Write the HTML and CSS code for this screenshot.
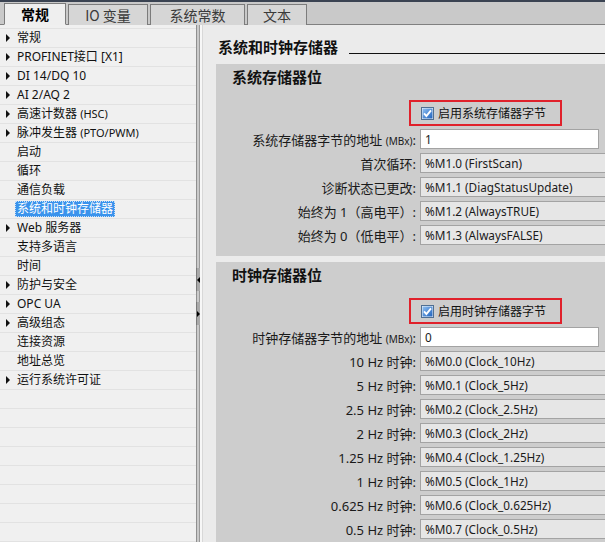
FILE: index.html
```html
<!DOCTYPE html>
<html lang="zh-CN">
<head>
<meta charset="utf-8">
<title>系统和时钟存储器</title>
<link rel="stylesheet" href="styles.css">
</head>
<body>
<div class="topline"></div>
<div class="tabbar">
  <div class="tab active">常规</div>
  <div class="tab t-io">IO 变量</div>
  <div class="tab t-const">系统常数</div>
  <div class="tab t-text">文本</div>
</div>
<div class="main">
  <div class="tree">
    <div class="row"><span class="arrow"></span><span class="lbl">常规</span></div>
    <div class="row"><span class="arrow"></span><span class="lbl">PROFINET接口 [X1]</span></div>
    <div class="row"><span class="arrow"></span><span class="lbl">DI 14/DQ 10</span></div>
    <div class="row"><span class="arrow"></span><span class="lbl">AI 2/AQ 2</span></div>
    <div class="row"><span class="arrow"></span><span class="lbl">高速计数器 <small>(HSC)</small></span></div>
    <div class="row"><span class="arrow"></span><span class="lbl">脉冲发生器 <small>(PTO/PWM)</small></span></div>
    <div class="row"><span class="noarrow"></span><span class="lbl">启动</span></div>
    <div class="row"><span class="noarrow"></span><span class="lbl">循环</span></div>
    <div class="row"><span class="noarrow"></span><span class="lbl">通信负载</span></div>
    <div class="row"><span class="noarrow"></span><span class="lbl selected">系统和时钟存储器</span></div>
    <div class="row"><span class="arrow"></span><span class="lbl">Web 服务器</span></div>
    <div class="row"><span class="noarrow"></span><span class="lbl">支持多语言</span></div>
    <div class="row"><span class="noarrow"></span><span class="lbl">时间</span></div>
    <div class="row"><span class="arrow"></span><span class="lbl">防护与安全</span></div>
    <div class="row"><span class="arrow"></span><span class="lbl">OPC UA</span></div>
    <div class="row"><span class="arrow"></span><span class="lbl">高级组态</span></div>
    <div class="row"><span class="noarrow"></span><span class="lbl">连接资源</span></div>
    <div class="row"><span class="noarrow"></span><span class="lbl">地址总览</span></div>
    <div class="row"><span class="arrow"></span><span class="lbl">运行系统许可证</span></div>
    <div class="row"></div>
    <div class="row"></div>
    <div class="row"></div>
    <div class="row"></div>
    <div class="row"></div>
    <div class="row"></div>
    <div class="row"></div>
    <div class="row"></div>
    <div class="row"></div>
  </div>
  <div class="splitter">
    <div class="sbtn sbtn-left"><span class="tri-left"></span></div>
    <div class="sbtn sbtn-right"><span class="tri-right"></span></div>
  </div>
  <div class="content">
    <div class="pagehead">
      <h1>系统和时钟存储器</h1>
      <div class="rule"></div>
    </div>

    <section class="group">
      <h2>系统存储器位</h2>
      <div class="checkwrap">
        <div class="redbox">
          <svg class="cb" width="13" height="13" viewBox="0 0 13 13"><defs><linearGradient id="g1" x1="0" y1="0" x2="1" y2="1"><stop offset="0" stop-color="#8fc0f2"/><stop offset="1" stop-color="#1f62bd"/></linearGradient></defs><rect x="0.5" y="0.5" width="12" height="12" fill="#eef4fa" stroke="#4f6f92"/><rect x="1.5" y="1.5" width="10" height="10" fill="url(#g1)"/><path d="M3 6.4 L5.4 9 L10 3.4" fill="none" stroke="#fff" stroke-width="1.9"/></svg>
          <span>启用系统存储器字节</span>
        </div>
      </div>
      <div class="frow"><label>系统存储器字节的地址 <small>(MBx)</small>:</label><div class="fld edit">1</div></div>
      <div class="frow"><label>首次循环:</label><div class="fld">%M1.0 (FirstScan)</div></div>
      <div class="frow"><label>诊断状态已更改:</label><div class="fld">%M1.1 (DiagStatusUpdate)</div></div>
      <div class="frow"><label>始终为 1（高电平）:</label><div class="fld">%M1.2 (AlwaysTRUE)</div></div>
      <div class="frow"><label>始终为 0（低电平）:</label><div class="fld">%M1.3 (AlwaysFALSE)</div></div>
    </section>

    <section class="group">
      <h2>时钟存储器位</h2>
      <div class="checkwrap">
        <div class="redbox">
          <svg class="cb" width="13" height="13" viewBox="0 0 13 13"><defs><linearGradient id="g2" x1="0" y1="0" x2="1" y2="1"><stop offset="0" stop-color="#8fc0f2"/><stop offset="1" stop-color="#1f62bd"/></linearGradient></defs><rect x="0.5" y="0.5" width="12" height="12" fill="#eef4fa" stroke="#4f6f92"/><rect x="1.5" y="1.5" width="10" height="10" fill="url(#g2)"/><path d="M3 6.4 L5.4 9 L10 3.4" fill="none" stroke="#fff" stroke-width="1.9"/></svg>
          <span>启用时钟存储器字节</span>
        </div>
      </div>
      <div class="frow"><label>时钟存储器字节的地址 <small>(MBx)</small>:</label><div class="fld edit">0</div></div>
      <div class="frow"><label>10 Hz 时钟:</label><div class="fld">%M0.0 (Clock_10Hz)</div></div>
      <div class="frow"><label>5 Hz 时钟:</label><div class="fld">%M0.1 (Clock_5Hz)</div></div>
      <div class="frow"><label>2.5 Hz 时钟:</label><div class="fld">%M0.2 (Clock_2.5Hz)</div></div>
      <div class="frow"><label>2 Hz 时钟:</label><div class="fld">%M0.3 (Clock_2Hz)</div></div>
      <div class="frow"><label>1.25 Hz 时钟:</label><div class="fld">%M0.4 (Clock_1.25Hz)</div></div>
      <div class="frow"><label>1 Hz 时钟:</label><div class="fld">%M0.5 (Clock_1Hz)</div></div>
      <div class="frow"><label>0.625 Hz 时钟:</label><div class="fld">%M0.6 (Clock_0.625Hz)</div></div>
      <div class="frow"><label>0.5 Hz 时钟:</label><div class="fld">%M0.7 (Clock_0.5Hz)</div></div>
    </section>
  </div>
</div>
</body>
</html>
```
FILE: styles.css
```css
* { box-sizing: border-box; }
html, body {
  margin: 0;
  padding: 0;
  width: 605px;
  height: 542px;
  overflow: hidden;
  background: #ebebeb;
  font-family: "Noto Sans", "Noto Sans CJK SC", sans-serif;
  font-size: 12px;
  color: #1a1a1a;
}
.topline {
  height: 2px;
  background: #3a4352;
}
.tabbar {
  height: 23px;
  background: #c9c9c9;
  border-bottom: 1px solid #808080;
  display: flex;
  align-items: flex-end;
  padding-left: 4px;
  gap: 2px;
}
.tab {
  height: 21px;
  margin-bottom: -1px;
  border: 1px solid #7c7c7c;
  border-bottom: none;
  background: #d6d6d6;
  color: #3a3a3a;
  font-family: "Noto Sans CJK SC", sans-serif;
  font-size: 14px;
  line-height: 20px;
  display: flex;
  justify-content: center;
}
.tab.active {
  width: 62px;
  height: 22px;
  background: #efefef;
  font-weight: bold;
  color: #000;
  border-bottom: 1px solid #efefef;
}
.t-io { width: 80px; }
.t-const { width: 95px; }
.t-text { width: 60px; }

.main {
  display: flex;
  height: 517px;
}
.tree {
  width: 196px;
  flex: none;
  background: #f0f0f0;
  padding-top: 3px;
  overflow: hidden;
}
.row {
  height: 19px;
  border-top: 1px solid #e2e2e2;
  display: flex;
  align-items: center;
  padding-left: 6px;
  white-space: nowrap;
}
.arrow {
  width: 0;
  height: 0;
  border-left: 4px solid #111;
  border-top: 4px solid transparent;
  border-bottom: 4px solid transparent;
  margin-right: 7px;
}
.noarrow {
  width: 4px;
  margin-right: 7px;
}
.lbl {
  font-size: 12px;
  line-height: 16px;
  color: #111;
}
.lbl small { font-size: 11px; }
.lbl.selected {
  background: #3a93ec;
  color: #fff;
  margin-left: -2px;
  padding: 0 2px;
  outline: 1px dotted #c8e0f8;
  outline-offset: -1px;
}

.splitter {
  width: 7px;
  flex: none;
  background: linear-gradient(to right, #8f8f8f 0, #8f8f8f 1px, #cacaca 1px, #cacaca 3px, #9a9a9a 3px, #9a9a9a 4px, #f7f7f7 4px, #f7f7f7 6px, #d8d8d8 6px);
  padding-top: 243px;
  display: flex;
  flex-direction: column;
  gap: 11px;
}
.sbtn {
  height: 23px;
  width: 4px;
  background: #a9a9a9;
  border-left: 1px solid #7a7a7a;
  display: flex;
  align-items: center;
  justify-content: center;
}
.tri-left {
  width: 0; height: 0;
  border-right: 3px solid #000;
  border-top: 3px solid transparent;
  border-bottom: 3px solid transparent;
}
.tri-right {
  width: 0; height: 0;
  border-left: 3px solid #000;
  border-top: 3px solid transparent;
  border-bottom: 3px solid transparent;
}

.content {
  flex: 1;
  min-width: 0;
  overflow: hidden;
  padding-left: 13px;
}
.pagehead {
  display: flex;
  align-items: flex-start;
  margin-top: 12px;
  height: 20px;
  margin-bottom: 7px;
}
.pagehead h1 {
  margin: 0 0 0 2px;
  font-family: "Noto Sans CJK SC", sans-serif;
  font-size: 15px;
  font-weight: bold;
  line-height: 20px;
  color: #111;
  white-space: nowrap;
}
.rule {
  flex: 1;
  height: 1px;
  background: #111;
  margin-top: 16px;
  margin-left: 11px;
}
.group {
  width: 410px;
  background: #cdcdcd;
  padding: 4px 0 11px 0;
  margin-bottom: 6px;
}
.group h2 {
  margin: 0 0 0 16px;
  font-family: "Noto Sans CJK SC", sans-serif;
  font-size: 15px;
  font-weight: bold;
  line-height: 18px;
  color: #111;
}
.checkwrap {
  margin-top: 14px;
  padding-left: 193px;
}
.redbox {
  width: 153px;
  height: 26px;
  border: 2px solid #e0212b;
  display: flex;
  align-items: center;
  padding-left: 10px;
  gap: 4px;
  font-size: 12px;
  color: #111;
}
.cb { flex: none; }
.frow {
  display: grid;
  grid-template-columns: 200px 1fr;
  column-gap: 4px;
  height: 20px;
  margin-top: 4px;
  align-items: center;
}
.checkwrap + .frow { margin-top: 3px; }
.frow label {
  text-align: right;
  white-space: nowrap;
  font-size: 13px;
  color: #1a1a1a;
}
.frow label small { font-size: 10px; }
.fld {
  height: 20px;
  border: 1px solid #a3a3a3;
  background: #e6e6e6;
  padding-left: 4px;
  font-size: 11.75px;
  line-height: 18px;
  color: #1a1a1a;
  white-space: nowrap;
}
.fld.edit {
  background: #fff;
  width: 179px;
}
```
